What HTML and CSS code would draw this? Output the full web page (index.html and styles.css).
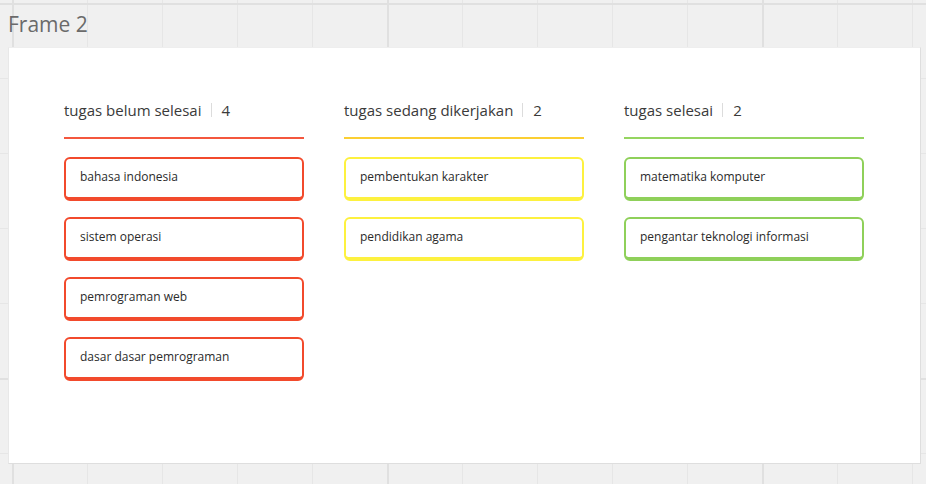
FILE: index.html
```html
<!DOCTYPE html>
<html lang="id">
<head>
<meta charset="utf-8">
<title>Frame 2</title>
<link rel="stylesheet" href="styles.css">
</head>
<body>
<div class="canvas">
  <div class="frame-title">Frame 2</div>
  <div class="frame">
    <div class="board">
      <section class="column col-red">
        <header class="col-head"><span class="col-name">tugas belum selesai</span><span class="sep"></span><span class="count">4</span></header>
        <div class="card">bahasa indonesia</div>
        <div class="card">sistem operasi</div>
        <div class="card">pemrograman web</div>
        <div class="card">dasar dasar pemrograman</div>
      </section>
      <section class="column col-yellow">
        <header class="col-head"><span class="col-name">tugas sedang dikerjakan</span><span class="sep"></span><span class="count">2</span></header>
        <div class="card">pembentukan karakter</div>
        <div class="card">pendidikan agama</div>
      </section>
      <section class="column col-green">
        <header class="col-head"><span class="col-name">tugas selesai</span><span class="sep"></span><span class="count">2</span></header>
        <div class="card">matematika komputer</div>
        <div class="card">pengantar teknologi informasi</div>
      </section>
    </div>
  </div>
</div>
</body>
</html>
```
FILE: styles.css
```css
html, body {
  margin: 0;
  padding: 0;
  height: 100%;
}
body {
  font-family: "Open Sans", "Noto Sans", sans-serif;
  background-color: #f0f0f0;
  background-image:
    linear-gradient(to right, #e0e0e0 0, #e0e0e0 2px, transparent 2px),
    linear-gradient(to bottom, #e0e0e0 0, #e0e0e0 2px, transparent 2px),
    linear-gradient(to right, #e6e6e6 0, #e6e6e6 1px, transparent 1px),
    linear-gradient(to bottom, #e6e6e6 0, #e6e6e6 1px, transparent 1px);
  background-size: 375px 375px, 375px 375px, 75px 75px, 75px 75px;
  background-position: 12px 0, 0 3px, 12px 0, 0 3px;
  overflow: hidden;
}
.canvas {
  padding: 10px 0 0 8px;
}
.frame-title {
  font-size: 21px;
  line-height: 28px;
  color: #6a6a6a;
  margin-bottom: 9px;
}
.frame {
  width: 913px;
  height: 417px;
  box-sizing: border-box;
  background: #fff;
  border: 1px solid #dedede;
  border-top-color: #eeeeee;
  border-left-color: #e8e8e8;
}
.board {
  display: flex;
  gap: 40px;
  padding: 53px 0 0 55px;
}
.column {
  width: 240px;
  display: flex;
  flex-direction: column;
  gap: 16px;
}
.col-head {
  display: flex;
  align-items: center;
  box-sizing: content-box;
  height: 18px;
  padding-bottom: 18px;
  border-bottom: 2px solid;
  font-size: 15px;
  color: #3a3a3a;
  margin-bottom: 2px;
}
.sep {
  width: 1px;
  height: 14px;
  background: #dcdcdc;
  margin: 0 10px 0 9px;
}
.card {
  height: 44px;
  box-sizing: border-box;
  border: 2px solid;
  border-bottom-width: 4px;
  border-radius: 6px;
  padding: 0 14px 4px;
  display: flex;
  align-items: center;
  font-size: 12px;
  color: #2b2b2b;
  background: #fff;
}
.col-red .col-head { border-bottom-color: #f4573e; }
.col-red .card { border-color: #f24a2c; }
.col-yellow .col-head { border-bottom-color: #fbcf33; }
.col-yellow .card { border-color: #fdf13f; }
.col-green .col-head { border-bottom-color: #95d560; }
.col-green .card { border-color: #8fd05a; }
```
